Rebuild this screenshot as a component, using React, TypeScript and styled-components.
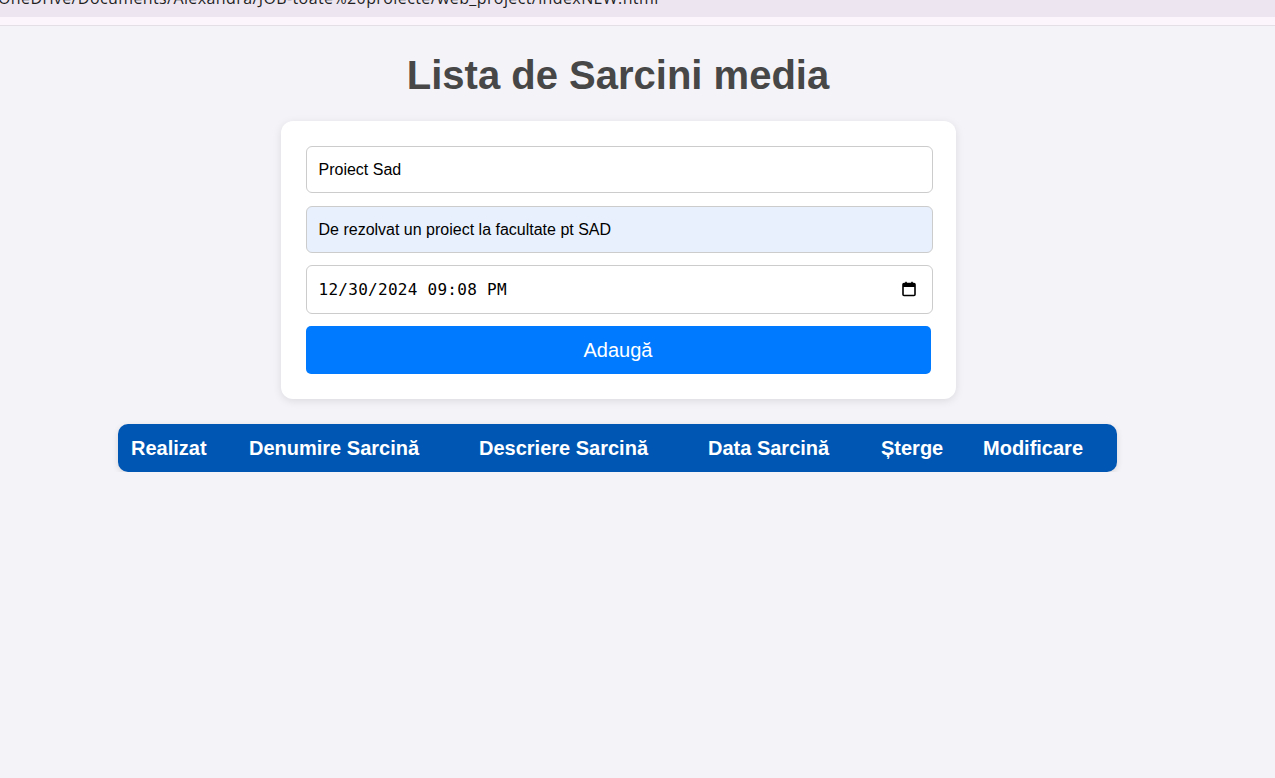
import React from "react";
import styled, { createGlobalStyle } from "styled-components";

const Global = createGlobalStyle`
  html, body { margin: 0; padding: 0; background: #f4f3f8; }
  body { font-family: "Liberation Sans", Arial, sans-serif; }
  * { box-sizing: border-box; }
`;

const BrowserStrip = styled.div`
  height: 17px;
  background: #ede6f0;
  overflow: hidden;
`;

const AddressText = styled.div`
  font-family: "Open Sans", sans-serif;
  font-size: 16px;
  letter-spacing: 0.4px;
  line-height: 16px;
  color: #1f1f1f;
  white-space: nowrap;
  margin-top: -10px;
  margin-left: -2px;
`;

const Band = styled.div`
  height: 9px;
  background: #fcf5fc;
  border-bottom: 1px solid #e4dee7;
`;

const Page = styled.main`
  width: 1236px;
  display: flex;
  flex-direction: column;
  align-items: center;
  padding-top: 26px;
`;

const Title = styled.h1`
  margin: 0 0 23px;
  font-size: 40px;
  line-height: 46px;
  font-weight: bold;
  color: #474747;
`;

const Card = styled.form`
  width: 675px;
  background: #fff;
  border-radius: 12px;
  padding: 25px;
  box-shadow: 0 2px 8px rgba(0, 0, 0, 0.1);
  display: flex;
  flex-direction: column;
  gap: 12px;
  margin-bottom: 25px;
`;

const Input = styled.input<{ $filled?: boolean }>`
  width: 627px;
  height: 47px;
  border: 1px solid #cccccc;
  border-radius: 6px;
  padding: 0 12px;
  font-family: "Liberation Sans", Arial, sans-serif;
  font-size: 16px;
  color: #000;
  background: ${(p) => (p.$filled ? "#e8f0fe" : "#fff")};
  outline: none;
  &:first-child { margin-bottom: 1px; }
`;

const DateField = styled.div`
  position: relative;
  width: 627px;
  height: 49px;
`;

const DateInput = styled(Input)`
  height: 49px;
  padding-right: 40px;
  font-family: "DejaVu Sans Mono", monospace;
  font-size: 16px;
  letter-spacing: 0.28px;
`;

const CalendarIcon = styled.svg`
  position: absolute;
  right: 16px;
  top: 16px;
  width: 16px;
  height: 16px;
  pointer-events: none;
`;

const Button = styled.button`
  width: 625px;
  height: 48px;
  border: none;
  border-radius: 5px;
  background: #007bff;
  color: #fff;
  font-family: "Liberation Sans", Arial, sans-serif;
  font-size: 20px;
  cursor: pointer;
`;

const TableHead = styled.div`
  width: 999px;
  height: 48px;
  margin-right: 1px;
  background: #0056b3;
  border-radius: 10px;
  box-shadow: 0 2px 6px rgba(0, 0, 0, 0.12);
  display: flex;
  align-items: center;
`;

const HeadCell = styled.div<{ $w: number }>`
  width: ${(p) => p.$w}px;
  padding-left: 13px;
  color: #fff;
  font-weight: bold;
  font-size: 20px;
  white-space: nowrap;
`;

const columns: [string, number][] = [
  ["Realizat", 118],
  ["Denumire Sarcină", 230],
  ["Descriere Sarcină", 229],
  ["Data Sarcină", 173],
  ["Șterge", 102],
  ["Modificare", 147],
];

export default function App() {
  return (
    <>
      <Global />
      <BrowserStrip>
        <AddressText>OneDrive/Documents/Alexandra/JOB-toate%20proiecte/web_project/indexNEW.html</AddressText>
      </BrowserStrip>
      <Band />
      <Page>
        <Title>Lista de Sarcini media</Title>
        <Card onSubmit={(e) => e.preventDefault()}>
          <Input defaultValue="Proiect Sad" />
          <Input $filled defaultValue="De rezolvat un proiect la facultate pt SAD" />
          <DateField>
            <DateInput defaultValue="12/30/2024 09:08 PM" />
            <CalendarIcon viewBox="0 0 16 16">
              <rect x="2" y="2.5" width="12" height="12" rx="1" fill="none" stroke="#000" strokeWidth="1.6" />
              <rect x="2" y="2.5" width="12" height="3.5" fill="#000" />
              <rect x="4.2" y="0.8" width="1.6" height="2.5" fill="#000" />
              <rect x="10.2" y="0.8" width="1.6" height="2.5" fill="#000" />
            </CalendarIcon>
          </DateField>
          <Button type="submit">Adaugă</Button>
        </Card>
        <TableHead>
          {columns.map(([label, w]) => (
            <HeadCell key={label} $w={w}>
              {label}
            </HeadCell>
          ))}
        </TableHead>
      </Page>
    </>
  );
}
